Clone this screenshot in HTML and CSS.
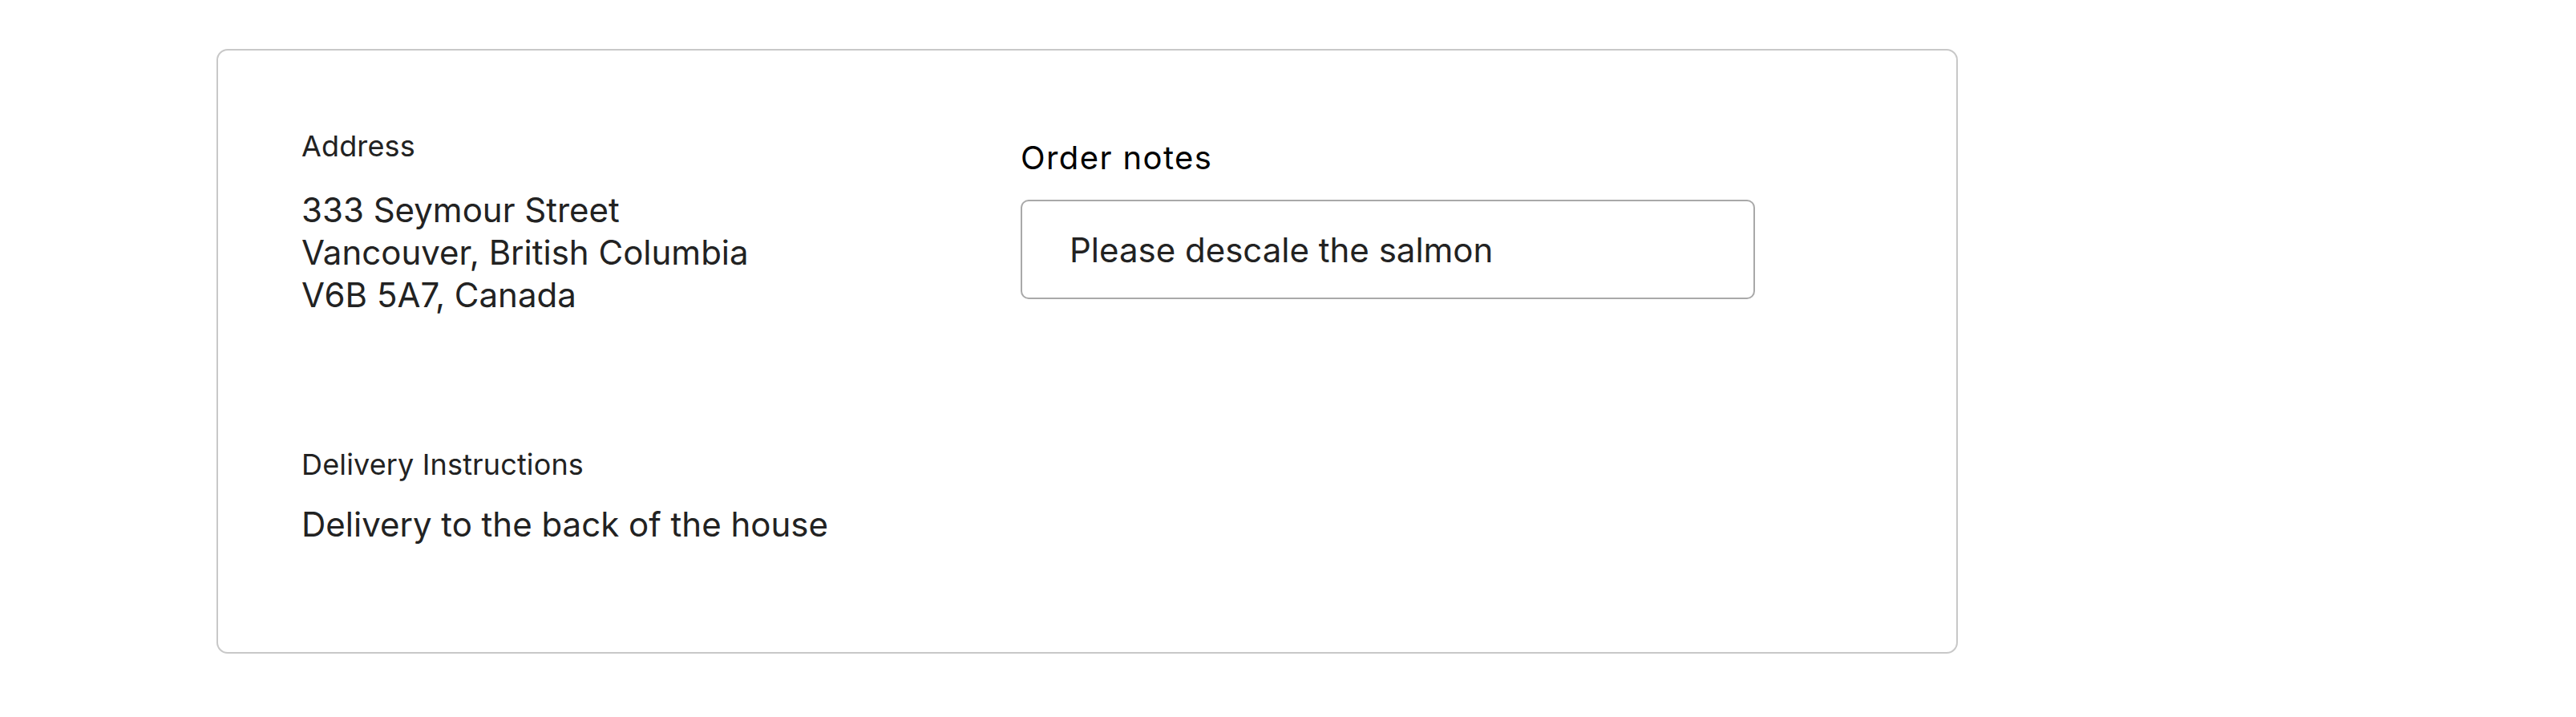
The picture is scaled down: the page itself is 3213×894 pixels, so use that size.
FILE: index.html
```html
<!DOCTYPE html>
<html>
<head>
    <title>Order details</title>
<link rel="stylesheet" href="styles.css">
</head>
<body>
    <div class="page">
        <div class="card">
            <div class="section">
                <div class="label">Address</div>
                <div class="value address">
                    333 Seymour Street<br>
                    Vancouver, British Columbia<br>
                    V6B 5A7, Canada
                </div>
            </div>

            <div class="section notes">
                <label for="order_notes" class="notes-label">Order notes</label>
                <div class="notes-box" id="order_notes">Please descale the salmon</div>
            </div>

            <div class="section delivery">
                <div class="label">Delivery Instructions</div>
                <div class="value delivery-text">Delivery to the back of the house</div>
            </div>
        </div>
    </div>
</body>
</html>
```

FILE: styles.css
```css
body {
  margin: 0;
  background: #ffffff;
  font-family: Inter, "Noto Sans", sans-serif;
  color: #222222;
}

.page {
  padding: 61px 0 0 270px;
}

.card {
  box-sizing: border-box;
  width: 2172px;
  border: 2px solid #c8c8c8;
  border-radius: 14px;
  padding: 99px 104px 133px;
  display: grid;
  grid-template-columns: 897px 916px;
  row-gap: 165px;
}

.label {
  font-size: 36px;
  letter-spacing: 0.15px;
  line-height: 40px;
  color: #222222;
}

.value {
  font-size: 42px;
  line-height: 53px;
  color: #222222;
}

.address {
  margin-top: 33px;
}

.delivery {
  grid-column: 1;
}

.delivery-text {
  margin-top: 28px;
}

.notes-label {
  display: block;
  margin-top: 12px;
  font-size: 40px;
  letter-spacing: 1.4px;
  line-height: 45px;
  color: #000000;
}

.notes-box {
  margin-top: 30px;
  box-sizing: border-box;
  height: 124px;
  border: 2px solid #a9a9a9;
  border-radius: 10px;
  padding: 34px 59px;
  font-size: 42px;
  line-height: 53px;
  color: #222222;
}
```
